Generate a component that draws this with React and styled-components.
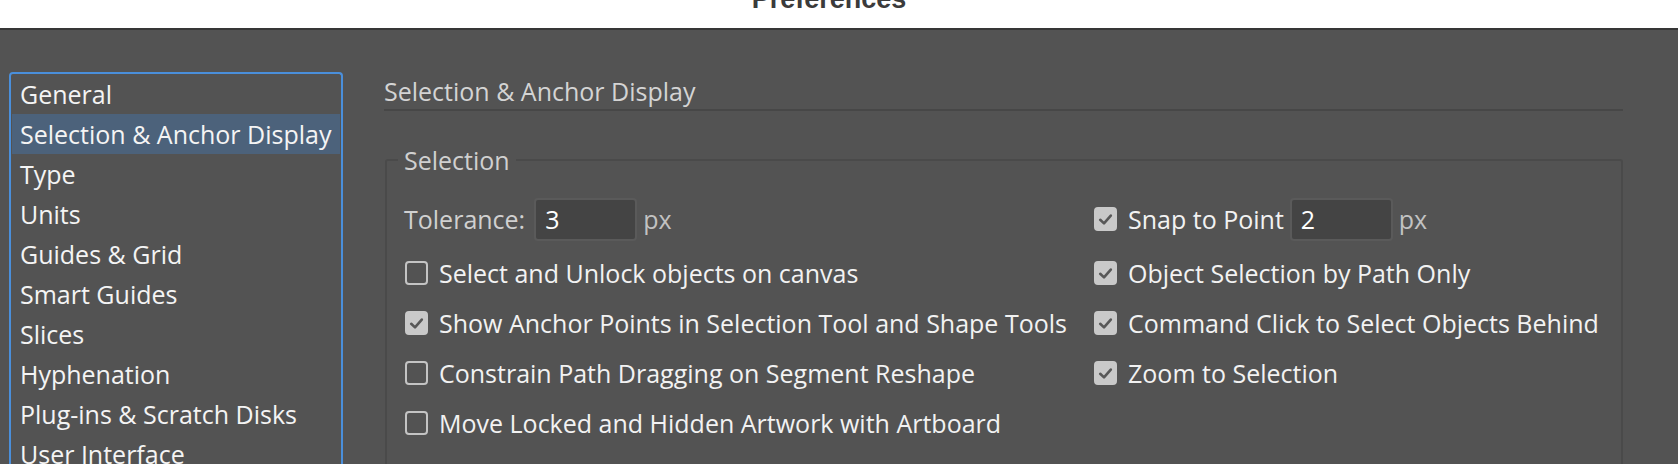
import React from "react";
import styled, { createGlobalStyle } from "styled-components";

const Global = createGlobalStyle`
  html, body { margin: 0; padding: 0; }
  body {
    width: 1678px;
    height: 464px;
    overflow: hidden;
    background: #535353;
    font-family: "Open Sans", "Noto Sans", sans-serif;
  }
  * { box-sizing: border-box; }
`;

const Window = styled.div`
  width: 1678px;
  height: 464px;
  display: flex;
  flex-direction: column;
  overflow: hidden;
  background: #535353;
`;

const TitleBar = styled.div`
  height: 30px;
  flex: none;
  background: #ffffff;
  border-bottom: 2px solid #363636;
  display: flex;
  justify-content: center;
  align-items: flex-end;
  overflow: hidden;
  padding-right: 20px;
`;

const Title = styled.div`
  font-family: "Liberation Sans", Arial, sans-serif;
  font-weight: 700;
  font-size: 27px;
  line-height: 27px;
  color: #3b3b3b;
  margin-bottom: 15px;
  white-space: nowrap;
`;

const Body = styled.div`
  display: flex;
  flex: 1;
  min-height: 0;
  padding-left: 9px;
`;

const Sidebar = styled.ul`
  list-style: none;
  margin: 42px 0 0;
  padding: 0 1px;
  width: 334px;
  height: 460px;
  flex: none;
  border: 2px solid #4a8fdb;
  border-bottom: none;
  border-radius: 4px 4px 0 0;
`;

const NavItem = styled.li`
  height: 40px;
  line-height: 40px;
  padding-left: 8px;
  font-size: 25px;
  color: #f4f4f4;
  white-space: nowrap;
  background: ${(p) => (p.$active ? "#4c627b" : "transparent")};
`;

const Main = styled.div`
  flex: none;
  width: 1239px;
  margin-left: 41px;
  padding-top: 45px;
`;

const Heading = styled.div`
  font-size: 25px;
  line-height: 32px;
  color: #d4d4d4;
  padding-bottom: 2px;
  border-bottom: 2px solid #474747;
`;

const Group = styled.fieldset`
  margin: 33px 0 0 1px;
  padding: 14px 0 0 0;
  border: 2px solid #4a4a4a;
  border-bottom: none;
  border-radius: 3px 3px 0 0;
  min-width: 0;
  height: 400px;
`;

const Legend = styled.legend`
  margin-left: 11px;
  padding: 0 6px;
  font-size: 25px;
  line-height: 32px;
  color: #d0d0d0;
`;

const Grid = styled.div`
  display: grid;
  padding-left: 17px;
  grid-template-columns: 689px 1fr;
  grid-template-rows: 58px repeat(4, 50px);
  align-items: center;
`;

const Row = styled.div`
  display: flex;
  align-items: center;
  white-space: nowrap;
`;

const Label = styled.span`
  font-size: 25px;
  line-height: 30px;
  color: ${(p) => (p.$dim ? "#d0d0d0" : "#f2f2f2")};
`;

const Box = styled.span`
  flex: none;
  width: 23px;
  height: 24px;
  margin-left: 1px;
  margin-right: 11px;
  border-radius: 4px;
  border: 2px solid ${(p) => (p.$checked ? "#c9c9c9" : "#c4c4c4")};
  background: ${(p) => (p.$checked ? "#c9c9c9" : "transparent")};
  display: flex;
  align-items: center;
  justify-content: center;
`;

const Field = styled.span`
  flex: none;
  width: 103px;
  height: 43px;
  margin-left: ${(p) => p.$gap}px;
  padding-left: 9px;
  border: 2px solid #5a5a5a;
  border-radius: 4px;
  background: #444444;
  color: #ffffff;
  font-size: 25px;
  line-height: 39px;
`;

const Unit = styled.span`
  margin-left: 6px;
  font-size: 25px;
  color: #c2c2c2;
`;

function Check({ checked }) {
  return (
    <Box $checked={checked}>
      {checked && (
        <svg width="17" height="17" viewBox="0 0 17 17">
          <path
            d="M3.2 8.8 L7 12.4 L13.8 4.6"
            fill="none"
            stroke="#585858"
            strokeWidth="2.6"
            strokeLinecap="round"
            strokeLinejoin="round"
          />
        </svg>
      )}
    </Box>
  );
}

function Option({ checked, children }) {
  return (
    <Row>
      <Check checked={checked} />
      <Label>{children}</Label>
    </Row>
  );
}

const navItems = [
  "General",
  "Selection & Anchor Display",
  "Type",
  "Units",
  "Guides & Grid",
  "Smart Guides",
  "Slices",
  "Hyphenation",
  "Plug-ins & Scratch Disks",
  "User Interface",
  "Performance",
];

export default function App() {
  return (
    <Window>
      <Global />
      <TitleBar>
        <Title>Preferences</Title>
      </TitleBar>
      <Body>
        <Sidebar>
          {navItems.map((item) => (
            <NavItem key={item} $active={item === "Selection & Anchor Display"}>
              {item}
            </NavItem>
          ))}
        </Sidebar>
        <Main>
          <Heading>Selection &amp; Anchor Display</Heading>
          <Group>
            <Legend>Selection</Legend>
            <Grid>
              <Row>
                <Label $dim>Tolerance:</Label>
                <Field $gap={9}>3</Field>
                <Unit>px</Unit>
              </Row>
              <Row>
                <Check checked />
                <Label>Snap to Point</Label>
                <Field $gap={6}>2</Field>
                <Unit>px</Unit>
              </Row>
              <Option>Select and Unlock objects on canvas</Option>
              <Option checked>Object Selection by Path Only</Option>
              <Option checked>Show Anchor Points in Selection Tool and Shape Tools</Option>
              <Option checked>Command Click to Select Objects Behind</Option>
              <Option>Constrain Path Dragging on Segment Reshape</Option>
              <Option checked>Zoom to Selection</Option>
              <Option>Move Locked and Hidden Artwork with Artboard</Option>
            </Grid>
          </Group>
        </Main>
      </Body>
    </Window>
  );
}
